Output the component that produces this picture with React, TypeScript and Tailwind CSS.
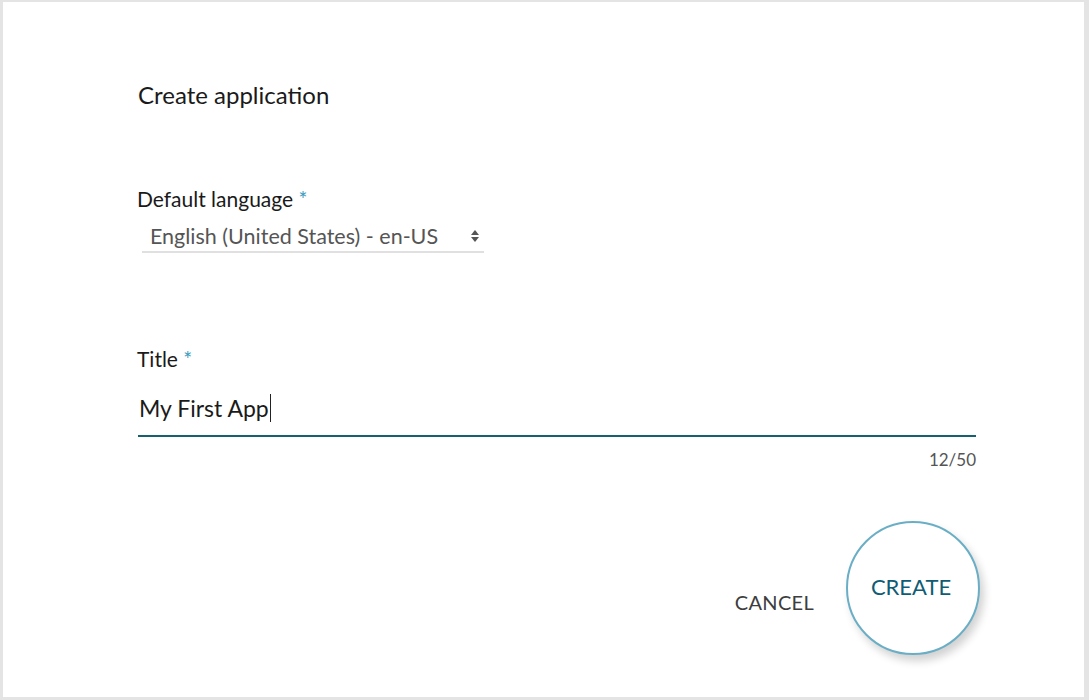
export default function App() {
  return (
    <div className="w-[1089px] h-[700px] bg-white border-l-[3px] border-t-2 border-r-[5px] border-b-[3px] border-[#e4e4e4] font-['Lato',sans-serif] text-[#1a1a1a]">
      <div className="pl-[135px] pr-[108px] pt-[79px]">
        {/* Header */}
        <h1 className="text-[24px] leading-[28px]">Create application</h1>

        {/* Default language */}
        <div className="mt-[78px]">
          <label className="block text-[21px] leading-[24px] -ml-[1px]">
            Default language <span className="text-[#3a9bbd]">*</span>
          </label>
          <div className="mt-[11px] ml-[4px] w-[342px] border-b-2 border-[#e0e0e0] flex items-center justify-between pl-[8px] pr-[4px] pb-[1px]">
            <span className="text-[21.5px] leading-[28px] text-[#555]">English (United States) - en-US</span>
            <svg width="10" height="16" viewBox="0 0 10 16">
              <path d="M5 2 L9 7 H1 Z" fill="#555" />
              <path d="M5 14 L9 9 H1 Z" fill="#555" />
            </svg>
          </div>
        </div>

        {/* Title */}
        <div className="mt-[94px]">
          <label className="block text-[21px] leading-[24px] -ml-[1px]">
            Title <span className="text-[#3a9bbd]">*</span>
          </label>
          <div className="mt-[23px] border-b-2 border-[#16606f] pb-[13px] flex items-center">
            <span className="text-[23px] leading-[28px] ml-[1px]">My First App</span>
            <span className="w-px h-[28px] bg-[#222] ml-[1px]" />
          </div>
          <div className="text-right text-[17px] leading-[20px] text-[#555] mt-[13px]">12/50</div>
        </div>

        {/* Actions */}
        <div className="flex items-center justify-end mt-[51px]">
          <button className="text-[20px] text-[#3d3d3d] tracking-[0.3px] mt-[28px] mr-[32px]">CANCEL</button>
          <button className="w-[134px] h-[134px] rounded-full border-2 border-[#6aaec6] bg-white shadow-[4px_6px_8px_rgba(0,0,0,0.18)] flex items-center justify-center mr-[-4px]">
            <span className="text-[22px] text-[#0f5c74] mb-[4px] mr-[4px]">CREATE</span>
          </button>
        </div>
      </div>
    </div>
  );
}
